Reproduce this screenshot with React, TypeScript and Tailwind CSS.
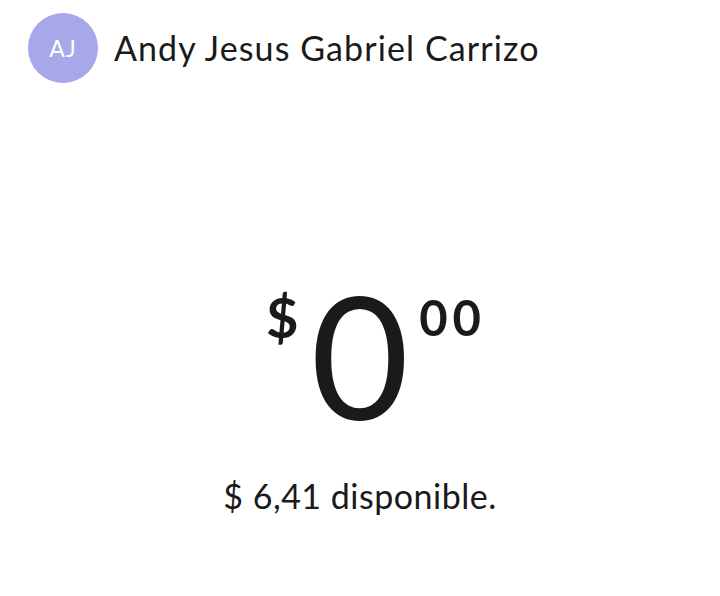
export default function App() {
  return (
    <div className="w-[720px] h-[596px] bg-white text-[#1a1a1a] overflow-hidden" style={{ fontFamily: "Lato, 'Open Sans', sans-serif" }}>
      <div className="flex items-center gap-4 pl-[28px] pt-[13px]">
        <div className="w-[70px] h-[70px] rounded-full bg-[#a6a8ea] flex items-center justify-center text-white text-[23px] tracking-[1px] leading-none">
          AJ
        </div>
        <div className="text-[34px] tracking-[1.1px] leading-none">Andy Jesus Gabriel Carrizo</div>
      </div>
      <div className="flex justify-center items-start mt-[186px] pl-[32px]">
        <span className="text-[56px] leading-none font-bold mt-[20px]">$</span>
        <span className="text-[170px] leading-none ml-[12px] mr-[10px]">0</span>
        <span className="text-[49px] leading-none font-bold tracking-[5px] mt-[24px]">00</span>
      </div>
      <div className="flex justify-center mt-[40px] text-[34px] tracking-[0.5px] leading-none">$ 6,41 disponible.</div>
    </div>
  );
}
